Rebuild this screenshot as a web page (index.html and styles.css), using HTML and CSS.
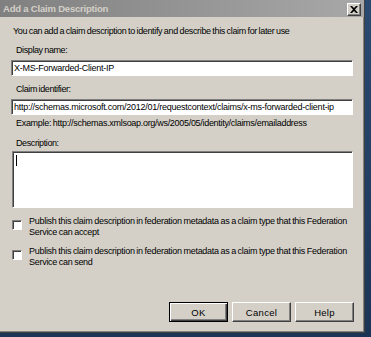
FILE: index.html
```html
<!DOCTYPE html>
<html>
<head>
<meta charset="utf-8">
<link rel="stylesheet" href="styles.css">
</head>
<body>
<div class="screen">
  <div class="dialog">
    <div class="titlebar">
      <span class="title">Add a Claim Description</span>
      <span class="close"><svg width="8" height="7" viewBox="0 0 8 7"><path d="M0 0h2l2 2 2-2h2L5 3.5 8 7H6L4 5 2 7H0l3-3.5z" fill="#000"/></svg></span>
    </div>
    <div class="body">
      <p class="intro">You can add a claim description to identify and describe this claim for later use</p>
      <div class="lbl">Display name:</div>
      <div class="field">X-MS-Forwarded-Client-IP</div>
      <div class="lbl">Claim identifier:</div>
      <div class="field">http://schemas.microsoft.com/2012/01/requestcontext/claims/x-ms-forwarded-client-ip</div>
      <div class="hint">Example: http://schemas.xmlsoap.org/ws/2005/05/identity/claims/emailaddress</div>
      <div class="lbl lbl-desc">Description:</div>
      <div class="area"><span class="caret"></span></div>
      <div class="check"><span class="box"></span><span class="ctext">Publish this claim description in federation metadata as a claim type that this Federation Service can accept</span></div>
      <div class="check"><span class="box"></span><span class="ctext">Publish this claim description in federation metadata as a claim type that this Federation Service can send</span></div>
      <div class="buttons">
        <button class="btn default">OK</button>
        <button class="btn">Cancel</button>
        <button class="btn">Help</button>
      </div>
    </div>
  </div>
</div>
</body>
</html>
```
FILE: styles.css
```css
html, body {
  margin: 0;
  padding: 0;
}
body {
  width: 371px;
  height: 337px;
  overflow: hidden;
  font-family: "Liberation Sans", Arial, sans-serif;
  font-size: 9px;
  letter-spacing: -0.4px;
  word-spacing: -0.5px;
  color: #000;
}
.screen {
  width: 371px;
  height: 337px;
  background: linear-gradient(to bottom, #2a4a72, #1b3456);
}
.dialog {
  width: 364px;
  height: 332px;
  background: #d4d0c8;
  border-right: 1px solid #404040;
  border-bottom: 1px solid #404040;
  box-shadow: inset -1px -1px 0 #808080;
  display: flex;
  flex-direction: column;
}
.titlebar {
  flex: none;
  height: 17px;
  background: linear-gradient(to right, #808080, #a8a8a8);
  display: flex;
  align-items: center;
  justify-content: space-between;
  padding: 0 3px 0 3px;
}
.title {
  font-weight: bold;
  font-size: 9.5px;
  letter-spacing: -0.2px;
  word-spacing: 0;
  color: #d4d0c8;
  line-height: 17px;
}
.close {
  width: 12px;
  height: 11px;
  background: #d4d0c8;
  border: 1px solid;
  border-color: #fff #404040 #404040 #fff;
  box-shadow: inset -1px -1px 0 #808080;
  display: flex;
  align-items: center;
  justify-content: center;
  margin-top: 1px;
}
.body {
  flex: 1;
  padding: 9px 11px 10px 11px;
  display: flex;
  flex-direction: column;
  line-height: 11px;
}
.intro {
  margin: 0 0 0 2px;
  white-space: nowrap;
  letter-spacing: -0.35px;
}
.lbl {
  margin: 8px 0 4px 5px;
  white-space: nowrap;
}
.field {
  height: 12px;
  line-height: 12px;
  background: #fff;
  border: 1px solid;
  border-color: #808080 #fff #fff #808080;
  box-shadow: inset 1px 1px 0 #404040;
  padding: 1px 0 1px 2px;
  white-space: nowrap;
  overflow: hidden;
  letter-spacing: -0.25px;
}
.hint {
  margin: 3px 0 0 5px;
  white-space: nowrap;
  letter-spacing: -0.3px;
}
.lbl-desc {
  margin-top: 9px;
  margin-bottom: 2px;
}
.area {
  height: 49px;
  background: #fff;
  border: 1px solid;
  border-color: #808080 #fff #fff #808080;
  box-shadow: inset 1px 1px 0 #404040;
  margin-left: 1px;
  padding: 3px 3px;
}
.caret {
  display: block;
  width: 1px;
  height: 11px;
  background: #000;
}
.check {
  display: flex;
  align-items: flex-start;
  margin-top: 8px;
  padding-left: 1px;
}
.box {
  flex: none;
  width: 8px;
  height: 8px;
  background: #fff;
  border: 1px solid;
  border-color: #808080 #fff #fff #808080;
  box-shadow: inset 1px 1px 0 #404040;
  margin-top: 4px;
  margin-right: 7px;
}
.ctext {
  width: 326px;
  letter-spacing: -0.28px;
}
.buttons {
  display: flex;
  justify-content: flex-end;
  gap: 4px;
  margin-top: auto;
  margin-right: -1px;
}
.btn {
  width: 59px;
  height: 20px;
  font-family: inherit;
  font-size: 9.5px;
  letter-spacing: 0.3px;
  background: #d4d0c8;
  border: 1px solid;
  border-color: #fff #404040 #404040 #fff;
  box-shadow: inset -1px -1px 0 #808080;
  padding: 0;
  color: #000;
}
.btn.default {
  border: 1px solid #000;
  box-shadow: inset 1px 1px 0 #fff, inset -1px -1px 0 #404040, inset -2px -2px 0 #808080;
}
```
